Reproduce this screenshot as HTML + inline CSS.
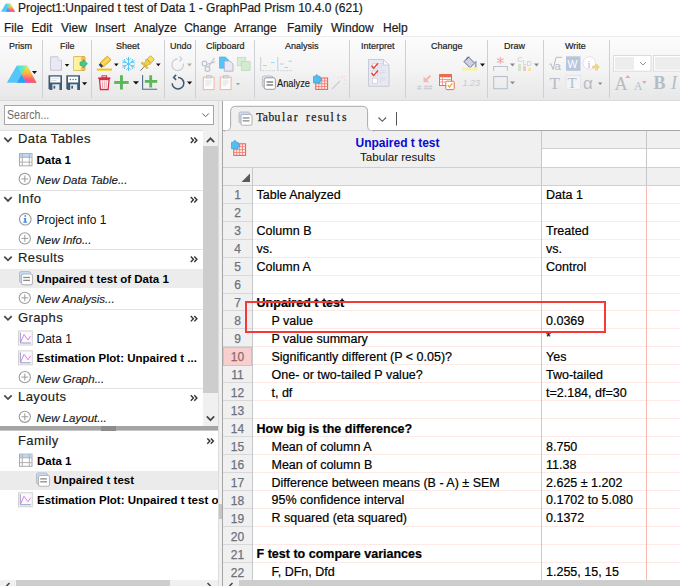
<!DOCTYPE html><html><head><meta charset="utf-8"><style>
*{box-sizing:border-box;margin:0;padding:0}
html,body{width:680px;height:586px;overflow:hidden;background:#fff}
body{position:relative;font-family:"Liberation Sans",sans-serif;color:#000}
.a{position:absolute}
.t{position:absolute;white-space:nowrap;line-height:1}
svg{position:absolute;overflow:visible}
#title{left:18px;top:2.4px;font-size:12px;color:#1a1a1a;-webkit-text-stroke:0.2px #1a1a1a}
.menu{top:22px;font-size:12px;color:#1a1a1a;-webkit-text-stroke:0.2px #1a1a1a}
.gl{top:41.5px;font-size:9px;color:#1e1e1e;-webkit-text-stroke:0.2px #1e1e1e}
.sep{position:absolute;top:40px;width:1px;height:58px;background:#cdd0d5}
.nh{font-size:13px;color:#222;letter-spacing:0.4px;-webkit-text-stroke:0.15px #222}
.ni{font-size:12px;color:#111}
.nb{font-size:11.5px;font-weight:bold;color:#000}
.nn{font-size:11.5px;font-style:italic;color:#1a1a1a;-webkit-text-stroke:0.15px #1a1a1a}
.rn{position:absolute;left:223px;width:29px;text-align:center;font-size:12px;color:#6d7079;line-height:1;-webkit-text-stroke:0.25px #6d7079}
.c1{position:absolute;font-size:12.5px;line-height:1;white-space:nowrap;color:#000;-webkit-text-stroke:0.2px #000}
</style></head><body>
<div class="t" id="title">Project1:Unpaired t test of Data 1 - GraphPad Prism 10.4.0 (621)</div>
<div class="t menu" style="left:4px">File</div>
<div class="t menu" style="left:31.6px">Edit</div>
<div class="t menu" style="left:61px">View</div>
<div class="t menu" style="left:95px">Insert</div>
<div class="t menu" style="left:134px">Analyze</div>
<div class="t menu" style="left:184.2px">Change</div>
<div class="t menu" style="left:234px">Arrange</div>
<div class="t menu" style="left:287px">Family</div>
<div class="t menu" style="left:331px">Window</div>
<div class="t menu" style="left:383px">Help</div>
<div class="a" style="left:0;top:36px;width:680px;height:65px;background:linear-gradient(#fcfcfc,#f4f4f4 50%,#e7e7e7);border-top:1px solid #ececec;border-bottom:1px solid #dadada"></div>
<div class="t gl" style="left:9px">Prism</div>
<div class="t gl" style="left:60px">File</div>
<div class="t gl" style="left:116px">Sheet</div>
<div class="t gl" style="left:170px">Undo</div>
<div class="t gl" style="left:206px">Clipboard</div>
<div class="t gl" style="left:285px">Analysis</div>
<div class="t gl" style="left:361px">Interpret</div>
<div class="t gl" style="left:431px">Change</div>
<div class="t gl" style="left:504px">Draw</div>
<div class="t gl" style="left:565px">Write</div>
<div class="sep" style="left:42px"></div>
<div class="sep" style="left:91px"></div>
<div class="sep" style="left:164px"></div>
<div class="sep" style="left:195px"></div>
<div class="sep" style="left:254px"></div>
<div class="sep" style="left:349px"></div>
<div class="sep" style="left:405px"></div>
<div class="sep" style="left:487px"></div>
<div class="sep" style="left:543px"></div>
<div class="sep" style="left:609px"></div>
<div class="t" style="left:277px;top:78.5px;font-size:10.3px;color:#1a1a1a;transform:scaleX(0.9);transform-origin:0 0;-webkit-text-stroke:0.15px #1a1a1a">Analyze</div>
<div class="a" style="left:0;top:101px;width:218px;height:486px;background:#f0f0f0"></div>
<div class="a" style="left:4px;top:105px;width:210px;height:20px;background:#fff;border:1px solid #a6a6a6"></div>
<div class="t" style="left:6.5px;top:109px;font-size:12px;color:#6d6d6d;transform:scaleX(0.88);transform-origin:0 0">Search...</div>
<svg style="left:0;top:0" width="1" height="1"><polyline points="202.3,113.4 205.6,116.7 208.9,113.4" fill="none" stroke="#606060" stroke-width="1"/></svg>
<div class="a" style="left:0;top:130px;width:203px;height:296px;background:#fff;border-top:1px solid #dedede"></div>
<div class="a" style="left:203px;top:131px;width:15px;height:295px;background:#f0f0f0"></div>
<div class="a" style="left:203px;top:146.3px;width:15px;height:246.5px;background:#cdcdcd"></div>
<svg style="left:0;top:0" width="1" height="1"><polyline points="206.8,142.2 210.5,138.3 214.2,142.2" fill="none" stroke="#4a4a4a" stroke-width="1.7"/><polyline points="206.8,416.3 210.5,420.2 214.2,416.3" fill="none" stroke="#4a4a4a" stroke-width="1.7"/></svg>
<div class="a" style="left:0;top:190px;width:203px;height:1px;background:#e3e3e3"></div>
<div class="a" style="left:0;top:249px;width:203px;height:1px;background:#e3e3e3"></div>
<div class="a" style="left:0;top:309px;width:203px;height:1px;background:#e3e3e3"></div>
<div class="a" style="left:0;top:388px;width:203px;height:1px;background:#e3e3e3"></div>
<div class="a" style="left:0;top:268.8px;width:203px;height:19.6px;background:#ececec"></div>
<div class="t nh" style="left:18px;top:132.3px">Data Tables</div>
<svg style="left:0;top:0" width="1" height="1"><polyline points="4.3,137.7 8,141.4 11.7,137.7" fill="none" stroke="#4a4a4a" stroke-width="1.8"/></svg>
<svg style="left:0;top:0" width="1" height="1"><g fill="none" stroke="#333" stroke-width="1.4"><polyline points="190.8,137.60000000000002 193.4,140.3 190.8,143.00000000000003"/><polyline points="194.3,137.60000000000002 196.9,140.3 194.3,143.00000000000003"/></g></svg>
<div class="t nb" style="left:36.5px;top:154.7px">Data 1</div>
<svg style="left:0;top:0" width="1" height="1"><rect x="19.5" y="153.62" width="12.5" height="12.2" fill="#fff" stroke="#a9a9a9" stroke-width="1"/><rect x="20" y="154.12" width="11.5" height="3" fill="#b9d9f9"/><line x1="22.3" y1="153.62" x2="22.3" y2="165.82" stroke="#b0b0b0" stroke-width="1"/><line x1="29.3" y1="153.62" x2="29.3" y2="165.82" stroke="#b0b0b0" stroke-width="1"/><line x1="19.5" y1="157.32" x2="32" y2="157.32" stroke="#b0b0b0" stroke-width="1"/><line x1="19.5" y1="162.12" x2="32" y2="162.12" stroke="#b0b0b0" stroke-width="1"/></svg>
<div class="t nn" style="left:36.5px;top:175.3px">New Data Table...</div>
<svg style="left:0;top:0" width="1" height="1"><circle cx="24.8" cy="178.94" r="5.6" fill="#fff" stroke="#9c9c9c" stroke-width="1.1"/><line x1="21.400000000000002" y1="178.94" x2="28.2" y2="178.94" stroke="#9c9c9c" stroke-width="1"/><line x1="24.8" y1="175.54" x2="24.8" y2="182.34" stroke="#9c9c9c" stroke-width="1"/></svg>
<div class="t nh" style="left:18px;top:191.8px">Info</div>
<svg style="left:0;top:0" width="1" height="1"><polyline points="4.3,197.2 8,200.9 11.7,197.2" fill="none" stroke="#4a4a4a" stroke-width="1.8"/></svg>
<svg style="left:0;top:0" width="1" height="1"><g fill="none" stroke="#333" stroke-width="1.4"><polyline points="190.8,197.06000000000003 193.4,199.76000000000002 190.8,202.46000000000004"/><polyline points="194.3,197.06000000000003 196.9,199.76000000000002 194.3,202.46000000000004"/></g></svg>
<div class="t ni" style="left:36.5px;top:213.6px">Project info 1</div>
<svg style="left:0;top:0" width="1" height="1"><circle cx="25.3" cy="219.18" r="5.8" fill="#fff" stroke="#9c9c9c" stroke-width="1.1"/><circle cx="25.3" cy="215.98000000000002" r="0.9" fill="#3d8ee8"/><path d="M23.7,217.98000000000002 h2.4 v3.6 h1 v1.1 h-3.8 v-1.1 h1 v-2.5 h-0.6 z" fill="#3d8ee8"/></svg>
<div class="t nn" style="left:36.5px;top:234.8px">New Info...</div>
<svg style="left:0;top:0" width="1" height="1"><circle cx="24.8" cy="238.4" r="5.6" fill="#fff" stroke="#9c9c9c" stroke-width="1.1"/><line x1="21.400000000000002" y1="238.4" x2="28.2" y2="238.4" stroke="#9c9c9c" stroke-width="1"/><line x1="24.8" y1="235.0" x2="24.8" y2="241.8" stroke="#9c9c9c" stroke-width="1"/></svg>
<div class="t nh" style="left:18px;top:251.2px">Results</div>
<svg style="left:0;top:0" width="1" height="1"><polyline points="4.3,256.6 8,260.3 11.7,256.6" fill="none" stroke="#4a4a4a" stroke-width="1.8"/></svg>
<svg style="left:0;top:0" width="1" height="1"><g fill="none" stroke="#333" stroke-width="1.4"><polyline points="190.8,256.52000000000004 193.4,259.22 190.8,261.92"/><polyline points="194.3,256.52000000000004 196.9,259.22 194.3,261.92"/></g></svg>
<div class="t nb" style="left:36.5px;top:273.6px">Unpaired t test of Data 1</div>
<svg style="left:0;top:0" width="1" height="1"><rect x="19.5" y="271.54" width="11" height="11.2" rx="1.8" fill="#c4dbf3" stroke="#b4bccb" stroke-width="1"/><rect x="21.5" y="274.04" width="11" height="10.8" rx="1.8" fill="#fff" stroke="#b5b5b5" stroke-width="1.1"/><rect x="23.2" y="276.84000000000003" width="6.8" height="1.3" fill="#8c8c8c"/><rect x="23.2" y="279.74" width="6.8" height="1.3" fill="#8c8c8c"/></svg>
<div class="t nn" style="left:36.5px;top:294.3px">New Analysis...</div>
<svg style="left:0;top:0" width="1" height="1"><circle cx="24.8" cy="297.86" r="5.6" fill="#fff" stroke="#9c9c9c" stroke-width="1.1"/><line x1="21.400000000000002" y1="297.86" x2="28.2" y2="297.86" stroke="#9c9c9c" stroke-width="1"/><line x1="24.8" y1="294.46000000000004" x2="24.8" y2="301.26" stroke="#9c9c9c" stroke-width="1"/></svg>
<div class="t nh" style="left:18px;top:310.7px">Graphs</div>
<svg style="left:0;top:0" width="1" height="1"><polyline points="4.3,316.1 8,319.8 11.7,316.1" fill="none" stroke="#4a4a4a" stroke-width="1.8"/></svg>
<svg style="left:0;top:0" width="1" height="1"><g fill="none" stroke="#333" stroke-width="1.4"><polyline points="190.8,315.98 193.4,318.68 190.8,321.38"/><polyline points="194.3,315.98 196.9,318.68 194.3,321.38"/></g></svg>
<div class="t ni" style="left:36.5px;top:332.5px">Data 1</div>
<svg style="left:0;top:0" width="1" height="1"><rect x="18.5" y="331.0" width="13.8" height="14" fill="#fafafa" stroke="#d2d2d2" stroke-width="1"/><path d="M20.3,332.5 v10.5 h10.5" fill="none" stroke="#8e9cc4" stroke-width="1"/><polyline points="20.5,342.5 24,334.5 28,340.0 30.5,336.0" fill="none" stroke="#e07ef2" stroke-width="1"/></svg>
<div class="t nb" style="left:36.5px;top:352.9px">Estimation Plot: Unpaired t ...</div>
<svg style="left:0;top:0" width="1" height="1"><rect x="18.5" y="350.82000000000005" width="13.8" height="14" fill="#fafafa" stroke="#d2d2d2" stroke-width="1"/><path d="M20.3,352.32000000000005 v10.5 h10.5" fill="none" stroke="#8e9cc4" stroke-width="1"/><polyline points="20.5,362.32000000000005 24,354.32000000000005 28,359.82000000000005 30.5,355.82000000000005" fill="none" stroke="#e07ef2" stroke-width="1"/></svg>
<div class="t nn" style="left:36.5px;top:373.5px">New Graph...</div>
<svg style="left:0;top:0" width="1" height="1"><circle cx="24.8" cy="377.14" r="5.6" fill="#fff" stroke="#9c9c9c" stroke-width="1.1"/><line x1="21.400000000000002" y1="377.14" x2="28.2" y2="377.14" stroke="#9c9c9c" stroke-width="1"/><line x1="24.8" y1="373.74" x2="24.8" y2="380.53999999999996" stroke="#9c9c9c" stroke-width="1"/></svg>
<div class="t nh" style="left:18px;top:390.0px">Layouts</div>
<svg style="left:0;top:0" width="1" height="1"><polyline points="4.3,395.4 8,399.1 11.7,395.4" fill="none" stroke="#4a4a4a" stroke-width="1.8"/></svg>
<svg style="left:0;top:0" width="1" height="1"><g fill="none" stroke="#333" stroke-width="1.4"><polyline points="190.8,395.26000000000005 193.4,397.96000000000004 190.8,400.66"/><polyline points="194.3,395.26000000000005 196.9,397.96000000000004 194.3,400.66"/></g></svg>
<div class="t nn" style="left:36.5px;top:413.2px">New Layout...</div>
<svg style="left:0;top:0" width="1" height="1"><circle cx="24.8" cy="416.78000000000003" r="5.6" fill="#fff" stroke="#9c9c9c" stroke-width="1.1"/><line x1="21.400000000000002" y1="416.78000000000003" x2="28.2" y2="416.78000000000003" stroke="#9c9c9c" stroke-width="1"/><line x1="24.8" y1="413.38000000000005" x2="24.8" y2="420.18" stroke="#9c9c9c" stroke-width="1"/></svg>
<div class="a" style="left:0;top:426px;width:219px;height:5px;background:#a4a4a4;border-bottom:1px solid #c8c8c8"></div>
<div class="a" style="left:0;top:431px;width:218px;height:149px;background:#fff"></div>
<div class="a" style="left:0;top:470.5px;width:218px;height:19px;background:#ebebeb"></div>
<div class="t nh" style="left:18px;top:434.4px">Family</div>
<svg style="left:0;top:0" width="1" height="1"><g fill="none" stroke="#333" stroke-width="1.4"><polyline points="207.3,438.40000000000003 209.9,441.1 207.3,443.8"/><polyline points="210.8,438.40000000000003 213.4,441.1 210.8,443.8"/></g></svg>
<div class="t nb" style="left:37px;top:455.6px">Data 1</div>
<svg style="left:0;top:0" width="1" height="1"><rect x="19.5" y="454.12" width="12.5" height="12.2" fill="#fff" stroke="#a9a9a9" stroke-width="1"/><rect x="20" y="454.62" width="11.5" height="3" fill="#b9d9f9"/><line x1="22.3" y1="454.12" x2="22.3" y2="466.32" stroke="#b0b0b0" stroke-width="1"/><line x1="29.3" y1="454.12" x2="29.3" y2="466.32" stroke="#b0b0b0" stroke-width="1"/><line x1="19.5" y1="457.82" x2="32" y2="457.82" stroke="#b0b0b0" stroke-width="1"/><line x1="19.5" y1="462.62" x2="32" y2="462.62" stroke="#b0b0b0" stroke-width="1"/></svg>
<div class="t nb" style="left:53.5px;top:475.4px">Unpaired t test</div>
<svg style="left:0;top:0" width="1" height="1"><rect x="36.5" y="472.94" width="11" height="11.2" rx="1.8" fill="#c4dbf3" stroke="#b4bccb" stroke-width="1"/><rect x="38.5" y="475.44" width="11" height="10.8" rx="1.8" fill="#fff" stroke="#b5b5b5" stroke-width="1.1"/><rect x="40.2" y="478.24" width="6.8" height="1.3" fill="#8c8c8c"/><rect x="40.2" y="481.14" width="6.8" height="1.3" fill="#8c8c8c"/></svg>
<div class="t nb" style="left:37px;top:495.3px">Estimation Plot: Unpaired t test of</div>
<svg style="left:0;top:0" width="1" height="1"><rect x="18.5" y="492.76" width="13.8" height="14" fill="#fafafa" stroke="#d2d2d2" stroke-width="1"/><path d="M20.3,494.26 v10.5 h10.5" fill="none" stroke="#8e9cc4" stroke-width="1"/><polyline points="20.5,504.26 24,496.26 28,501.76 30.5,497.76" fill="none" stroke="#e07ef2" stroke-width="1"/></svg>
<div class="a" style="left:0;top:580px;width:218px;height:6px;background:#f0f0f0"></div>
<div class="a" style="left:15.5px;top:580px;width:154px;height:6px;background:#cdcdcd"></div>
<svg style="left:0;top:0" width="1" height="1"><polyline points="9.5,583 7,585.5 8,586.5" fill="none" stroke="#4a4a4a" stroke-width="1.6"/><polyline points="207.5,583 210,585.5 209,586.5" fill="none" stroke="#4a4a4a" stroke-width="1.6"/><polyline points="232.5,583 230,585.5 231,586.5" fill="none" stroke="#4a4a4a" stroke-width="1.6"/></svg>
<div class="a" style="left:218px;top:101px;width:4px;height:486px;background:#f0f0f0;border-left:1px solid #dcdcdc"></div>
<div class="a" style="left:222px;top:101px;width:1px;height:486px;background:#a5a5a5"></div>
<div class="a" style="left:218.5px;top:503.5px;width:3px;height:15px;background:#c6c6c6"></div>
<div class="a" style="left:101px;top:426px;width:15px;height:4.5px;background:#8c8c8c"></div>
<div class="a" style="left:223px;top:101px;width:457px;height:30px;background:#fff"></div>
<div class="a" style="left:223px;top:130px;width:457px;height:1px;background:#a8a8a8"></div>
<div class="a" style="left:223px;top:131px;width:457px;height:54px;background:#f0f0f0"></div>
<svg style="left:0;top:0" width="1" height="1"><path d="M224.5,131 C229.5,131 230.6,129 230.6,125 V111.5 Q230.6,106.3 235.8,106.3 H362.4 Q367.6,106.3 367.6,111.5 V125 C367.6,129 368.7,131 373.7,131 Z" fill="#f0f0f0" stroke="#a9a9a9" stroke-width="1"/><rect x="225" y="130.6" width="148" height="2" fill="#f0f0f0"/><polyline points="378.5,117.5 382.3,121.3 386.1,117.5" fill="none" stroke="#555" stroke-width="1.1"/><line x1="396.5" y1="112" x2="396.5" y2="125.5" stroke="#555" stroke-width="1"/></svg>
<svg style="left:0;top:0" width="1" height="1"><rect x="239.0" y="112.0" width="11" height="11.2" rx="1.8" fill="#c4dbf3" stroke="#b4bccb" stroke-width="1"/><rect x="241.0" y="114.5" width="11" height="10.8" rx="1.8" fill="#fff" stroke="#b5b5b5" stroke-width="1.1"/><rect x="242.7" y="117.3" width="6.8" height="1.3" fill="#8c8c8c"/><rect x="242.7" y="120.2" width="6.8" height="1.3" fill="#8c8c8c"/></svg>
<div class="t" style="left:256.2px;top:111.6px;font-family:'Liberation Serif',serif;font-size:11.6px;color:#1e1e2a;-webkit-text-stroke:0.25px #1e1e2a"><span style="display:inline-block;width:6.09px;text-align:center">T</span><span style="display:inline-block;width:6.09px;text-align:center">a</span><span style="display:inline-block;width:6.09px;text-align:center">b</span><span style="display:inline-block;width:6.09px;text-align:center">u</span><span style="display:inline-block;width:6.09px;text-align:center">l</span><span style="display:inline-block;width:6.09px;text-align:center">a</span><span style="display:inline-block;width:6.09px;text-align:center">r</span><span style="display:inline-block;width:6.09px;text-align:center">&nbsp;</span><span style="display:inline-block;width:6.09px;text-align:center">r</span><span style="display:inline-block;width:6.09px;text-align:center">e</span><span style="display:inline-block;width:6.09px;text-align:center">s</span><span style="display:inline-block;width:6.09px;text-align:center">u</span><span style="display:inline-block;width:6.09px;text-align:center">l</span><span style="display:inline-block;width:6.09px;text-align:center">t</span><span style="display:inline-block;width:6.09px;text-align:center">s</span></div>
<svg style="left:0;top:0" width="1" height="1"><rect x="233.8" y="143.8" width="11.8" height="11.6" fill="#fde9e6" stroke="#ef5a4a" stroke-width="1"/><g stroke="#f07a6c" stroke-width="0.8"><line x1="233.8" y1="146.7" x2="245.6" y2="146.7"/><line x1="233.8" y1="149.6" x2="245.6" y2="149.6"/><line x1="233.8" y1="152.5" x2="245.6" y2="152.5"/><line x1="236.7" y1="143.8" x2="236.7" y2="155.4"/><line x1="239.6" y1="143.8" x2="239.6" y2="155.4"/><line x1="242.5" y1="143.8" x2="242.5" y2="155.4"/></g><path d="M231.5,142.2 h2.2 v-0.6 a1.1,1.1 0 1 1 2.2,0 v0.6 h2.2 v2.2 h0.6 a1.1,1.1 0 1 1 0,2.2 h-0.6 v2.2 h-6.6 z" fill="#52bdf0" stroke="#2a98d8" stroke-width="0.6"/></svg>
<div class="a" style="left:541px;top:148px;width:139px;height:19px;background:#fff;border-top:1px solid #d0d0d0"></div>
<div class="a" style="left:223px;top:167px;width:457px;height:1px;background:#d0d0d0"></div>
<div class="a" style="left:223px;top:185px;width:457px;height:1px;background:#d0d0d0"></div>
<div class="a" style="left:541px;top:131px;width:1px;height:54px;background:#c4c8cc"></div>
<div class="a" style="left:646px;top:131px;width:1px;height:54px;background:#c4c8cc"></div>
<div class="a" style="left:252px;top:167px;width:1px;height:18px;background:#c4c8cc"></div>
<div class="t" style="left:355.5px;top:136.5px;font-size:12px;font-weight:bold;color:#0a0ad0">Unpaired t test</div>
<div class="t" style="left:360px;top:151px;font-size:11.6px;color:#111">Tabular results</div>
<svg style="left:0;top:0" width="1" height="1"><polygon points="250,173.5 250,182 241.5,182" fill="#5a5a5a"/></svg>
<div class="a" style="left:223px;top:186px;width:29px;height:394px;background:#f0f0f0"></div>
<div class="a" style="left:223px;top:203px;width:29px;height:1px;background:#d8d8d8"></div>
<div class="a" style="left:253px;top:203px;width:427px;height:1px;background:#fde9e5"></div>
<div class="a" style="left:223px;top:221px;width:29px;height:1px;background:#d8d8d8"></div>
<div class="a" style="left:253px;top:221px;width:427px;height:1px;background:#fde9e5"></div>
<div class="a" style="left:223px;top:239px;width:29px;height:1px;background:#d8d8d8"></div>
<div class="a" style="left:253px;top:239px;width:427px;height:1px;background:#fde9e5"></div>
<div class="a" style="left:223px;top:257px;width:29px;height:1px;background:#d8d8d8"></div>
<div class="a" style="left:253px;top:257px;width:427px;height:1px;background:#fde9e5"></div>
<div class="a" style="left:223px;top:275px;width:29px;height:1px;background:#d8d8d8"></div>
<div class="a" style="left:253px;top:275px;width:427px;height:1px;background:#fde9e5"></div>
<div class="a" style="left:223px;top:293px;width:29px;height:1px;background:#d8d8d8"></div>
<div class="a" style="left:253px;top:293px;width:427px;height:1px;background:#fde9e5"></div>
<div class="a" style="left:223px;top:310px;width:29px;height:1px;background:#d8d8d8"></div>
<div class="a" style="left:253px;top:310px;width:427px;height:1px;background:#fde9e5"></div>
<div class="a" style="left:223px;top:328px;width:29px;height:1px;background:#d8d8d8"></div>
<div class="a" style="left:253px;top:328px;width:427px;height:1px;background:#fde9e5"></div>
<div class="a" style="left:223px;top:346px;width:29px;height:1px;background:#d8d8d8"></div>
<div class="a" style="left:253px;top:346px;width:427px;height:1px;background:#fde9e5"></div>
<div class="a" style="left:223px;top:364px;width:29px;height:1px;background:#d8d8d8"></div>
<div class="a" style="left:253px;top:364px;width:427px;height:1px;background:#fde9e5"></div>
<div class="a" style="left:223px;top:382px;width:29px;height:1px;background:#d8d8d8"></div>
<div class="a" style="left:253px;top:382px;width:427px;height:1px;background:#fde9e5"></div>
<div class="a" style="left:223px;top:400px;width:29px;height:1px;background:#d8d8d8"></div>
<div class="a" style="left:253px;top:400px;width:427px;height:1px;background:#fde9e5"></div>
<div class="a" style="left:223px;top:418px;width:29px;height:1px;background:#d8d8d8"></div>
<div class="a" style="left:253px;top:418px;width:427px;height:1px;background:#fde9e5"></div>
<div class="a" style="left:223px;top:436px;width:29px;height:1px;background:#d8d8d8"></div>
<div class="a" style="left:253px;top:436px;width:427px;height:1px;background:#fde9e5"></div>
<div class="a" style="left:223px;top:454px;width:29px;height:1px;background:#d8d8d8"></div>
<div class="a" style="left:253px;top:454px;width:427px;height:1px;background:#fde9e5"></div>
<div class="a" style="left:223px;top:472px;width:29px;height:1px;background:#d8d8d8"></div>
<div class="a" style="left:253px;top:472px;width:427px;height:1px;background:#fde9e5"></div>
<div class="a" style="left:223px;top:490px;width:29px;height:1px;background:#d8d8d8"></div>
<div class="a" style="left:253px;top:490px;width:427px;height:1px;background:#fde9e5"></div>
<div class="a" style="left:223px;top:508px;width:29px;height:1px;background:#d8d8d8"></div>
<div class="a" style="left:253px;top:508px;width:427px;height:1px;background:#fde9e5"></div>
<div class="a" style="left:223px;top:526px;width:29px;height:1px;background:#d8d8d8"></div>
<div class="a" style="left:253px;top:526px;width:427px;height:1px;background:#fde9e5"></div>
<div class="a" style="left:223px;top:544px;width:29px;height:1px;background:#d8d8d8"></div>
<div class="a" style="left:253px;top:544px;width:427px;height:1px;background:#fde9e5"></div>
<div class="a" style="left:223px;top:562px;width:29px;height:1px;background:#d8d8d8"></div>
<div class="a" style="left:253px;top:562px;width:427px;height:1px;background:#fde9e5"></div>
<div class="a" style="left:223px;top:580px;width:29px;height:1px;background:#d8d8d8"></div>
<div class="a" style="left:253px;top:580px;width:427px;height:1px;background:#fde9e5"></div>
<div class="a" style="left:223px;top:347px;width:29px;height:19px;background:#f7cfcf;border:1px solid #f0b4b4"></div>
<div class="rn" style="top:189.4px;color:#6b7380">1</div>
<div class="c1" style="left:256.6px;top:189.2px;">Table Analyzed</div>
<div class="c1" style="left:546px;top:189.2px">Data 1</div>
<div class="rn" style="top:207.4px;color:#6b7380">2</div>
<div class="rn" style="top:225.3px;color:#6b7380">3</div>
<div class="c1" style="left:256.6px;top:225.1px;">Column B</div>
<div class="c1" style="left:546px;top:225.1px">Treated</div>
<div class="rn" style="top:243.3px;color:#6b7380">4</div>
<div class="c1" style="left:256.6px;top:243.1px;">vs.</div>
<div class="c1" style="left:546px;top:243.1px">vs.</div>
<div class="rn" style="top:261.2px;color:#6b7380">5</div>
<div class="c1" style="left:256.6px;top:261.0px;">Column A</div>
<div class="c1" style="left:546px;top:261.0px">Control</div>
<div class="rn" style="top:279.2px;color:#6b7380">6</div>
<div class="rn" style="top:297.1px;color:#6b7380">7</div>
<div class="c1" style="left:256.6px;top:296.9px;font-weight:bold;">Unpaired t test</div>
<div class="rn" style="top:315.1px;color:#6b7380">8</div>
<div class="c1" style="left:271.5px;top:314.9px;">P value</div>
<div class="c1" style="left:546px;top:314.9px">0.0369</div>
<div class="rn" style="top:333.0px;color:#6b7380">9</div>
<div class="c1" style="left:271.5px;top:332.8px;">P value summary</div>
<div class="c1" style="left:546px;top:331.0px">*</div>
<div class="rn" style="top:351.0px;color:#a46464">10</div>
<div class="c1" style="left:271.5px;top:350.8px;">Significantly different (P &lt; 0.05)?</div>
<div class="c1" style="left:546px;top:350.8px">Yes</div>
<div class="rn" style="top:369.0px;color:#6b7380">11</div>
<div class="c1" style="left:271.5px;top:368.8px;">One- or two-tailed P value?</div>
<div class="c1" style="left:546px;top:368.8px">Two-tailed</div>
<div class="rn" style="top:386.9px;color:#6b7380">12</div>
<div class="c1" style="left:271.5px;top:386.7px;">t, df</div>
<div class="c1" style="left:546px;top:386.7px">t=2.184, df=30</div>
<div class="rn" style="top:404.9px;color:#6b7380">13</div>
<div class="rn" style="top:422.8px;color:#6b7380">14</div>
<div class="c1" style="left:256.6px;top:422.6px;font-weight:bold;">How big is the difference?</div>
<div class="rn" style="top:440.8px;color:#6b7380">15</div>
<div class="c1" style="left:271.5px;top:440.6px;">Mean of column A</div>
<div class="c1" style="left:546px;top:440.6px">8.750</div>
<div class="rn" style="top:458.7px;color:#6b7380">16</div>
<div class="c1" style="left:271.5px;top:458.5px;">Mean of column B</div>
<div class="c1" style="left:546px;top:458.5px">11.38</div>
<div class="rn" style="top:476.7px;color:#6b7380">17</div>
<div class="c1" style="left:271.5px;top:476.5px;">Difference between means (B - A) &#177; SEM</div>
<div class="c1" style="left:546px;top:476.5px">2.625 &#177; 1.202</div>
<div class="rn" style="top:494.6px;color:#6b7380">18</div>
<div class="c1" style="left:271.5px;top:494.4px;">95% confidence interval</div>
<div class="c1" style="left:546px;top:494.4px">0.1702 to 5.080</div>
<div class="rn" style="top:512.6px;color:#6b7380">19</div>
<div class="c1" style="left:271.5px;top:512.4px;">R squared (eta squared)</div>
<div class="c1" style="left:546px;top:512.4px">0.1372</div>
<div class="rn" style="top:530.5px;color:#6b7380">20</div>
<div class="rn" style="top:548.5px;color:#6b7380">21</div>
<div class="c1" style="left:256.6px;top:548.3px;font-weight:bold;">F test to compare variances</div>
<div class="rn" style="top:566.5px;color:#6b7380">22</div>
<div class="c1" style="left:271.5px;top:566.3px;">F, DFn, Dfd</div>
<div class="c1" style="left:546px;top:566.3px">1.255, 15, 15</div>
<div class="a" style="left:252px;top:186px;width:1px;height:394px;background:#c4c8cc"></div>
<div class="a" style="left:541px;top:186px;width:1px;height:394px;background:#f6b8b0"></div>
<div class="a" style="left:646px;top:186px;width:1px;height:394px;background:#f6b8b0"></div>
<div class="a" style="left:245px;top:301px;width:361px;height:32px;border:2px solid #f53838"></div>
<div class="a" style="left:223px;top:580px;width:457px;height:6px;background:#f0f0f0"></div>
<div class="a" style="left:239px;top:580px;width:441px;height:6px;background:#cdcdcd"></div>
<svg style="left:0;top:0" width="1" height="1"><polyline points="232.5,583 230,585.5 231,586.5" fill="none" stroke="#4a4a4a" stroke-width="1.6"/></svg>
<svg style="left:0;top:0" width="680" height="100" viewBox="0 0 680 100">
<defs>
<linearGradient id="pyr" x1="0.2" y1="0" x2="0.1" y2="1"><stop offset="0" stop-color="#e4f25a"/><stop offset="0.45" stop-color="#ffb03a"/><stop offset="0.8" stop-color="#ff4f98"/><stop offset="1" stop-color="#ff44a0"/></linearGradient><linearGradient id="pyo" x1="0" y1="0" x2="1" y2="0"><stop offset="0" stop-color="#ff6a40" stop-opacity="0"/><stop offset="1" stop-color="#ff6a20" stop-opacity="1"/></linearGradient>
<linearGradient id="pyt" x1="0" y1="0" x2="1" y2="0"><stop offset="0" stop-color="#40dcec"/><stop offset="0.6" stop-color="#6ee8b8"/><stop offset="1" stop-color="#c8f060"/></linearGradient>
</defs>
<!-- title icon -->
<g transform="translate(1,3.8) scale(0.47)">
<polygon points="9.9,0 20.2,0 29.7,17 0,17" fill="#56c5f9"/>
<polygon points="14.7,8.7 10.2,17 19.7,17" fill="#2ba0f5"/>
<polygon points="9.9,0 20.2,0 14.7,8.7" fill="url(#pyt)"/>
<polygon points="20.2,0 29.7,17 19.7,17 14.7,8.7" fill="url(#pyr)"/><polygon points="24,10 29.7,17 21,17" fill="url(#pyo)"/>
</g>
<!-- Prism logo -->
<g transform="translate(6.8,65.8)">
<polygon points="9.9,0 20.2,0 29.7,17 0,17" fill="#56c5f9"/>
<polygon points="14.7,8.7 10.2,17 19.7,17" fill="#2ba0f5"/>
<polygon points="9.9,0 20.2,0 14.7,8.7" fill="url(#pyt)"/>
<polygon points="20.2,0 29.7,17 19.7,17 14.7,8.7" fill="url(#pyr)"/><polygon points="24,10 29.7,17 21,17" fill="url(#pyo)"/>
</g>
<polygon points="32,71 37,71 34.5,74" fill="#111"/>
<!-- File: new -->
<path d="M50.5,56.8 h7.5 l3.5,3.5 v10 h-11 z" fill="#e9e9f4" stroke="#c6c6d6" stroke-width="1"/>
<path d="M58,56.8 v3.5 h3.5" fill="#fff" stroke="#c6c6d6" stroke-width="0.8"/>
<polygon points="64.8,64 69.3,64 67,66.8" fill="#111"/>
<!-- open -->
<rect x="73.5" y="56.5" width="11.5" height="14" rx="1" fill="#f4c44c" stroke="#d8a030" stroke-width="0.8"/>
<rect x="73.5" y="56.8" width="8" height="13.5" fill="#fdf2a0" stroke="#e0c060" stroke-width="0.6"/>
<path d="M80,62 h3 v-2.5 l4.5,4.2 l-4.5,4.2 v-2.5 h-3 z" fill="#48c890" stroke="#2a9c6c" stroke-width="0.6"/>
<!-- save -->
<path d="M48.5,75.2 h13.5 v14.8 h-12 l-1.5,-1.5 z" fill="#3f5a77"/>
<rect x="50.2" y="76.6" width="10.2" height="5.9" fill="#ffffff"/>
<line x1="51.2" y1="78.4" x2="59.4" y2="78.4" stroke="#b8c2cc" stroke-width="0.6"/>
<line x1="51.2" y1="80.4" x2="56.5" y2="80.4" stroke="#b8c2cc" stroke-width="0.6"/>
<rect x="52.4" y="84.3" width="7" height="5.7" fill="#e6ebf0"/>
<rect x="53.5" y="85.8" width="1.7" height="2.8" fill="#3f5a77"/>
<path d="M66.3,75.2 h13.7 v14.8 h-12.2 l-1.5,-1.5 z" fill="#3f5a77"/>
<rect x="68" y="76.6" width="10.2" height="5.9" fill="#ffffff"/>
<circle cx="70.4" cy="79.5" r="0.75" fill="#56677a"/><circle cx="73.1" cy="79.5" r="0.75" fill="#56677a"/><circle cx="75.8" cy="79.5" r="0.75" fill="#56677a"/>
<rect x="70.2" y="84.3" width="7" height="5.7" fill="#e6ebf0"/>
<rect x="71.3" y="85.8" width="1.7" height="2.8" fill="#3f5a77"/>
<polygon points="82,82.2 87.2,82.2 84.6,85.2" fill="#111"/>
<!-- Sheet: highlighter -->
<g transform="rotate(-42 104.5 62.3)">
<rect x="100.5" y="59.6" width="10.5" height="5.4" rx="1" fill="#f7cf3e" stroke="#c99a1c" stroke-width="0.7"/>
<rect x="98.5" y="60.3" width="2.4" height="4" fill="#2a3a5c"/>
<line x1="102" y1="62.3" x2="110" y2="62.3" stroke="#fbe58a" stroke-width="1"/>
</g>
<rect x="96.8" y="68.6" width="15.2" height="2" fill="#f5c800"/>
<polygon points="114,63.6 118.6,63.6 116.3,66.2" fill="#111"/>
<!-- snowflake -->
<g stroke="#5ac6f2" stroke-width="1" fill="none" stroke-linecap="round">
<line x1="128.5" y1="57.3" x2="128.5" y2="70.7"/>
<line x1="122.7" y1="60.65" x2="134.3" y2="67.35"/>
<line x1="122.7" y1="67.35" x2="134.3" y2="60.65"/>
<g id="br"><path d="M126.5,58.3 l2,2 l2,-2"/></g>
<use href="#br" transform="rotate(60 128.5 64)"/>
<use href="#br" transform="rotate(120 128.5 64)"/>
<use href="#br" transform="rotate(180 128.5 64)"/>
<use href="#br" transform="rotate(240 128.5 64)"/>
<use href="#br" transform="rotate(300 128.5 64)"/>
</g>
<!-- pushpin -->
<line x1="140.3" y1="70.8" x2="145.2" y2="65.6" stroke="#7a7a7a" stroke-width="1"/>
<g transform="rotate(45 148 62)">
<path d="M145.8,66.5 h4.4 l-0.6,-3 l1.6,-1.4 v-1 h-6.4 v1 l1.6,1.4 z" fill="#f4d24a" stroke="#b89420" stroke-width="0.6"/>
<rect x="145.2" y="55.6" width="5.6" height="5" rx="1.2" fill="#f8de5c" stroke="#b89420" stroke-width="0.6"/>
<rect x="143.8" y="66" width="8.4" height="1.6" rx="0.5" fill="#f0c83a" stroke="#b89420" stroke-width="0.5"/>
</g>
<polygon points="156,63.6 160.6,63.6 158.3,66.2" fill="#111"/>
<!-- trash -->
<path d="M99.5,79.5 h9.6 l-1,10 h-7.6 z" fill="#fff" stroke="#d42e46" stroke-width="1.3"/>
<line x1="98.2" y1="78.2" x2="110.4" y2="78.2" stroke="#d42e46" stroke-width="1.6"/>
<rect x="102" y="75.8" width="4.6" height="2" fill="none" stroke="#d42e46" stroke-width="1"/>
<line x1="102.3" y1="81.2" x2="102.6" y2="88" stroke="#e58a96" stroke-width="0.8"/>
<line x1="104.3" y1="81.2" x2="104.3" y2="88" stroke="#e58a96" stroke-width="0.8"/>
<line x1="106.3" y1="81.2" x2="106" y2="88" stroke="#e58a96" stroke-width="0.8"/>
<!-- plus -->
<rect x="120" y="75.2" width="2.9" height="14.3" fill="#5cb65c"/>
<rect x="114.2" y="81" width="14.5" height="2.9" fill="#5cb65c"/>
<polygon points="133,81.2 139,81.2 136,84.6" fill="#111"/>
<!-- axis plus -->
<path d="M142.6,75 v14.2 h14.6" fill="none" stroke="#4f6a88" stroke-width="1.1"/>
<rect x="149.3" y="75.3" width="2.8" height="12.2" fill="#5cb65c"/>
<rect x="144.8" y="80" width="12.4" height="2.8" fill="#5cb65c"/>
<!-- Undo group -->
<path d="M177.7,58.9 A5.8,5.8 0 1 0 183.4,63.7" fill="none" stroke="#c5ccd5" stroke-width="1.2"/>
<polyline points="179.4,56.4 181.9,58.9 179.4,61.4" fill="none" stroke="#c5ccd5" stroke-width="1.2"/>
<polygon points="187,63.6 192,63.6 189.5,66.4" fill="#b0b0b0"/>
<path d="M178,77.4 A5.8,5.8 0 1 1 172.2,83.2" fill="none" stroke="#3e5a73" stroke-width="1.5"/>
<polyline points="176.1,74.9 173.6,77.4 176.1,79.9" fill="none" stroke="#3e5a73" stroke-width="1.5"/>
<polygon points="187,81.4 192.2,81.4 189.6,84.6" fill="#111"/>
<!-- Clipboard -->
<g stroke="#b9c1ca" stroke-width="1.1" fill="none">
<circle cx="204.5" cy="63.5" r="2.4"/><circle cx="207.5" cy="69" r="2.4"/>
<path d="M206.5,64.5 l8.8,-2.8 M208.5,67 l6,-9"/>
</g>
<path d="M219.5,57 h6 l3,3 v8.2 h-9 z" fill="#56c3f5" stroke="#3ea8e0" stroke-width="0.6"/>
<path d="M224.3,61 h5.7 l3,3 v7.2 h-8.7 z" fill="#e9e9f3" stroke="#a9aabb" stroke-width="0.8"/>
<rect x="237.3" y="57.3" width="8.5" height="8.5" fill="#d8ecd6" stroke="#bcdcba" stroke-width="0.7"/>
<rect x="241.3" y="61.6" width="8.8" height="9" fill="#d3ead0" stroke="#b8d8b5" stroke-width="0.7"/>
<rect x="203.3" y="77.2" width="10.8" height="12.4" fill="#fbfbfb" stroke="#f0b9aa" stroke-width="1.1"/>
<rect x="206.3" y="75.5" width="5" height="2.6" fill="#d8d8d8" stroke="#b8b8b8" stroke-width="0.5"/>
<g stroke="#dadada" stroke-width="0.8"><line x1="205.5" y1="81" x2="211.5" y2="81"/><line x1="205.5" y1="83" x2="211.5" y2="83"/><line x1="205.5" y1="85" x2="209.5" y2="85"/></g>
<rect x="220.3" y="77.2" width="10.8" height="12.4" fill="#fbfbfb" stroke="#f0b9aa" stroke-width="1.1"/>
<rect x="223.3" y="75.5" width="5" height="2.6" fill="#d8d8d8" stroke="#b8b8b8" stroke-width="0.5"/>
<g stroke="#dadada" stroke-width="0.8"><line x1="222.5" y1="81" x2="228.5" y2="81"/><line x1="222.5" y1="83" x2="228.5" y2="83"/><line x1="222.5" y1="85" x2="226.5" y2="85"/></g>
<polygon points="235.8,83 240.2,83 238,85.6" fill="#a8a8a8"/>
<!-- Analysis -->
<g stroke="#c8ced6" stroke-width="1" fill="none">
<path d="M260.7,57 v14"/><path d="M260.7,70.7 h14.5" stroke-dasharray="1.2,1"/>
<path d="M277.8,57 v14"/><path d="M277.8,70.7 h14.5" stroke-dasharray="1.2,1"/>
</g>
<g stroke="#9cd6ef" stroke-width="1"><line x1="263" y1="65.5" x2="266.5" y2="65.5"/><line x1="271" y1="62.5" x2="274.5" y2="62.5"/>
<line x1="280" y1="64" x2="283.5" y2="64"/><line x1="284.5" y1="67.5" x2="288" y2="67.5"/><line x1="288.5" y1="61.2" x2="292" y2="61.2"/></g>
<rect x="262.3" y="76" width="11" height="11" rx="2" fill="#dfe8f4" stroke="#a9b4c4" stroke-width="0.8"/>
<rect x="264.2" y="77.8" width="11.2" height="11.5" rx="2" fill="#fff" stroke="#8f8f8f" stroke-width="0.9"/>
<rect x="266.5" y="81.3" width="6.6" height="1.4" fill="#7a7a7a"/>
<rect x="266.5" y="84.3" width="6.6" height="1.4" fill="#7a7a7a"/>
<rect x="315.8" y="78" width="11.8" height="11.4" fill="#fde9e6" stroke="#ef5a4a" stroke-width="1"/>
<g stroke="#f07a6c" stroke-width="0.8"><line x1="315.8" y1="80.9" x2="327.6" y2="80.9"/><line x1="315.8" y1="83.7" x2="327.6" y2="83.7"/><line x1="315.8" y1="86.5" x2="327.6" y2="86.5"/>
<line x1="318.8" y1="78" x2="318.8" y2="89.4"/><line x1="321.7" y1="78" x2="321.7" y2="89.4"/><line x1="324.6" y1="78" x2="324.6" y2="89.4"/></g>
<path d="M313.5,76.4 h2.2 v-0.6 a1.1,1.1 0 1 1 2.2,0 v0.6 h2.2 v2.2 h0.6 a1.1,1.1 0 1 1 0,2.2 h-0.6 v2.2 h-6.6 z" fill="#52bdf0" stroke="#2a98d8" stroke-width="0.6"/>
<line x1="332" y1="89" x2="340" y2="81" stroke="#c8ced6" stroke-width="1.3"/>
<g stroke="#f6c0b0" stroke-width="0.7"><line x1="342" y1="76" x2="342" y2="78"/><line x1="344.5" y1="80" x2="346" y2="80"/><line x1="338" y1="77" x2="339" y2="78"/><line x1="344" y1="77" x2="345" y2="76"/><line x1="343.5" y1="83" x2="344.5" y2="84"/></g>
<!-- Interpret -->
<path d="M368.5,59.5 h15 l5.5,5.5 v21.2 h-20.5 z" fill="#e8e9f3" stroke="#c3c5d4" stroke-width="0.9"/>
<path d="M383.5,59.5 v5.5 h5.5 z" fill="#fff" stroke="#c3c5d4" stroke-width="0.8"/>
<rect x="372.3" y="63.8" width="5" height="4.8" fill="#fff" stroke="#c8cad6" stroke-width="0.7"/>
<rect x="372.3" y="71" width="5" height="4.8" fill="#fff" stroke="#c8cad6" stroke-width="0.7"/>
<rect x="372.3" y="78.3" width="5" height="5" fill="#fff" stroke="#c8cad6" stroke-width="0.7"/>
<path d="M371.5,65.8 l2.2,2.4 l4.3,-5" fill="none" stroke="#e8463a" stroke-width="1.5"/>
<path d="M371.5,73 l2.2,2.4 l4.3,-5" fill="none" stroke="#e8463a" stroke-width="1.5"/>
<g stroke="#cfd1dc" stroke-width="0.6"><line x1="379.5" y1="63.5" x2="383" y2="63.5"/><line x1="379.5" y1="65.5" x2="383" y2="65.5"/><line x1="379.5" y1="67.5" x2="382" y2="67.5"/>
<line x1="379.5" y1="70.5" x2="385.5" y2="70.5"/><line x1="379.5" y1="72.5" x2="385.5" y2="72.5"/><line x1="379.5" y1="74.5" x2="382" y2="74.5"/>
<line x1="379.5" y1="78" x2="385.5" y2="78"/><line x1="379.5" y1="80" x2="385.5" y2="80"/><line x1="379.5" y1="82" x2="382" y2="82"/></g>
<!-- Change -->
<path d="M430.5,75.5 l-5.5,5.5" fill="none" stroke="#f5b8b0" stroke-width="2"/><polygon points="423.5,76.5 423.5,82.3 429.3,82.3" fill="#f5b8b0"/>
<text x="417" y="89.5" font-family="Liberation Sans" font-size="7.8" font-style="italic" fill="#bcc3cc">#.##</text>
<rect x="439.5" y="74.5" width="12" height="11" fill="#fff" stroke="#f06a50" stroke-width="1"/>
<rect x="439.5" y="74.5" width="12" height="2.8" fill="#f06a50"/>
<g stroke="#f3937f" stroke-width="0.9"><line x1="440" y1="79.5" x2="451" y2="79.5"/><line x1="440" y1="82" x2="447" y2="82"/><line x1="442.5" y1="77.5" x2="442.5" y2="85.5"/></g>
<rect x="445.8" y="81.2" width="8.4" height="8.4" rx="1" fill="#fff" stroke="#f06a50" stroke-width="1"/>
<path d="M447.8,85.2 l1.6,1.8 l3,-3.6" fill="none" stroke="#f5a623" stroke-width="1.3"/>
<path d="M463.8,61.5 l5,-4.2 l5.8,5.8 l-4.6,4.6 z" fill="#cfcfe6" stroke="#5e6282" stroke-width="0.9"/>
<path d="M466,60 q1,-4 3.5,-3" fill="none" stroke="#5e6282" stroke-width="0.9"/>
<rect x="474.8" y="61" width="1.8" height="6.5" fill="#9ea2b8"/>
<rect x="462.3" y="67.5" width="15" height="3" fill="#f5f2a6"/>
<polygon points="480,63.4 485,63.4 482.5,66.4" fill="#111"/>
<text x="462.5" y="86.3" font-family="Liberation Sans" font-size="9" font-style="italic" fill="#c4cad2">1.23</text>
<!-- Draw -->
<g stroke="#f6acac" stroke-width="1.2"><line x1="500.3" y1="56.8" x2="500.3" y2="64.2"/><line x1="497" y1="58.6" x2="503.6" y2="62.4"/><line x1="497" y1="62.4" x2="503.6" y2="58.6"/></g>
<path d="M493.7,70.8 v-4.3 h13.6 v4.3" fill="none" stroke="#b7c2ce" stroke-width="1.1"/>
<polygon points="510,63.4 515,63.4 512.5,66.4" fill="#8a8a8a"/>
<text x="517.3" y="61.8" font-family="Liberation Sans" font-size="7.2" fill="#c0c8d2">C</text>
<text x="522.6" y="65.4" font-family="Liberation Sans" font-size="7.2" fill="#c0c8d2">L</text>
<text x="526.6" y="66" font-family="Liberation Sans" font-size="7.2" fill="#c0c8d2">D</text>
<rect x="518" y="64" width="3" height="7" fill="#cfe6cc"/>
<rect x="523" y="66" width="3" height="5" fill="#f6c8c0"/>
<rect x="528" y="68" width="3" height="3" fill="#f5e4a8"/>
<polygon points="534,63.4 539,63.4 536.5,66.4" fill="#8a8a8a"/>
<rect x="493.7" y="76.5" width="13.6" height="12.2" fill="none" stroke="#b7c2ce" stroke-width="1.1"/>
<polygon points="510,81.4 515,81.4 512.5,84.2" fill="#8a8a8a"/>
<!-- Write -->
<path d="M549.3,64.5 l1.6,-0.8 l2.2,5.8 l3,-12.2 h6" fill="none" stroke="#b4bcc6" stroke-width="1"/><text x="554.5" y="70" font-family="Liberation Sans" font-size="11.5" fill="#b4bcc6">a</text>
<rect x="566" y="56.3" width="14.5" height="14.5" fill="#b8c6da"/>
<text x="567.6" y="68" font-family="Liberation Sans" font-size="10.5" fill="#fff">W</text>
<circle cx="589.2" cy="63" r="6.3" fill="#fff" stroke="#d8dce2" stroke-width="0.8"/>
<text x="587.5" y="67.5" font-family="Liberation Serif" font-size="10" fill="#8ab6ea">i</text>
<path d="M592.5,66 h3 v-1.5 h2 v1.5 h1.5 v2 h-1.5 v2.3 h-2 v-2.3 h-3 z" fill="#f2d88a" stroke="#e0c060" stroke-width="0.4"/>
<text x="549.5" y="89" font-family="Liberation Serif" font-size="17" fill="#b4bcc6">T</text>
<rect x="566" y="75.3" width="14.5" height="14" fill="#f4f4f6" stroke="#e0e2e8" stroke-width="0.8"/>
<text x="567.5" y="88" font-family="Liberation Serif" font-size="15" fill="#b4bcc6">T</text>
<text x="583" y="88.5" font-family="Liberation Sans" font-size="17" fill="#b4bcc6">α</text>
<polygon points="598,82.6 602.4,82.6 600.2,85" fill="#8a8a8a"/>
<!-- font combos -->
<rect x="613.5" y="55.5" width="37.5" height="15.7" fill="#fff" stroke="#dcdcdc" stroke-width="1"/>
<rect x="615" y="57" width="19" height="12.7" fill="#ededed"/>
<polyline points="640,62 643,65 646,62" fill="none" stroke="#888" stroke-width="0.9"/>
<rect x="653.5" y="55.5" width="40" height="15.7" fill="#fff" stroke="#dcdcdc" stroke-width="1"/>
<rect x="655" y="57" width="30" height="12.7" fill="#ededed"/>
<text x="614.5" y="89.5" font-family="Liberation Serif" font-size="18" fill="#b4bcc6">A</text>
<polygon points="625.3,78 630.3,78 627.8,75" fill="#f4a4a4"/>
<text x="634" y="89.5" font-family="Liberation Serif" font-size="11.5" fill="#b4bcc6">A</text>
<polygon points="642,81 646.6,81 644.3,84" fill="#f4a4a4"/>
<text x="653.5" y="89" font-family="Liberation Serif" font-size="18" font-weight="bold" fill="#b4bcc6">B</text>
<text x="671" y="89" font-family="Liberation Serif" font-size="18" font-style="italic" fill="#b4bcc6">I</text>
</svg>

</body></html>
